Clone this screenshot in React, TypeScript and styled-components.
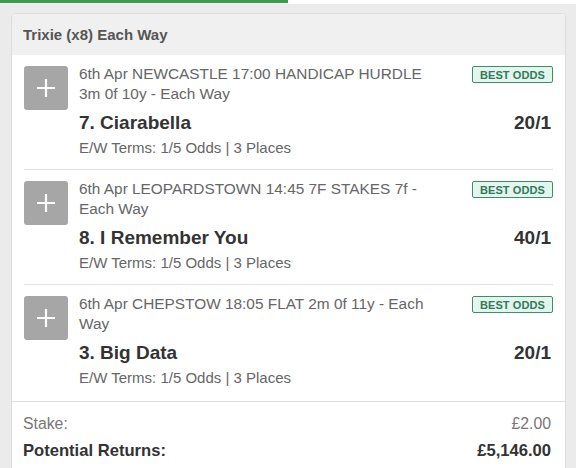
import React from "react";
import styled, { createGlobalStyle } from "styled-components";

const Global = createGlobalStyle`
  html, body { margin: 0; padding: 0; background: #ebebeb; }
  body { font-family: "Liberation Sans", Arial, sans-serif; }
`;

const Page = styled.div`
  width: 576px;
  height: 468px;
  overflow: hidden;
  background: #ebebeb;
`;

const Progress = styled.div`
  height: 4px;
  background: #ffffff;
  display: flex;
`;

const ProgressFill = styled.div`
  height: 3px;
  background: #3e9a4c;
`;

const Card = styled.div`
  margin: 9px 10px 0 11px;
  background: #fff;
  border: 1px solid #dcdcdc;
  border-radius: 4px;
  overflow: hidden;
`;

const Header = styled.div`
  height: 41px;
  display: flex;
  align-items: center;
  padding: 0 11px 1px;
  box-sizing: border-box;
  background: #f0f0f0;
  color: #555;
  font-weight: bold;
  font-size: 15px;
`;

const Item = styled.div<{ $last?: boolean }>`
  margin: 0 12px;
  padding: 11px 0 ${(p) => (p.$last ? "13px" : "11px")};
  border-bottom: ${(p) => (p.$last ? "none" : "1px solid #e2e2e2")};
  display: flex;
  gap: 11px;
`;

const PlusBox = styled.div`
  flex: none;
  width: 44px;
  height: 44px;
  border-radius: 3px;
  background: #a6a6a6;
  display: flex;
  align-items: center;
  justify-content: center;
`;

const Content = styled.div`
  flex: 1;
  min-width: 0;
  margin-top: -2px;
`;

const TopRow = styled.div`
  display: flex;
  justify-content: space-between;
  align-items: flex-start;
`;

const Desc = styled.div`
  width: 356px;
  font-size: 15.4px;
  line-height: 20px;
  color: #666;
`;

const Badge = styled.div`
  margin-top: 2px;
  width: 81px;
  height: 17px;
  box-sizing: border-box;
  border: 1px solid #3f8c6d;
  border-radius: 2px;
  background: #e4f5ed;
  color: #2f7a5c;
  font-size: 11px;
  font-weight: bold;
  display: flex;
  align-items: center;
  justify-content: center;
  letter-spacing: 0.1px;
`;

const NameRow = styled.div`
  margin-top: 7px;
  display: flex;
  justify-content: space-between;
  align-items: center;
  font-size: 19px;
  line-height: 24px;
  font-weight: bold;
  color: #333;
`;

const Odds = styled.span`
  margin-right: 2px;
`;

const Terms = styled.div`
  margin-top: 3px;
  font-size: 15px;
  line-height: 20px;
  color: #666;
`;

const Footer = styled.div`
  border-top: 1px solid #dedede;
  padding: 8px 14px 10px 11px;
`;

const FooterRow = styled.div<{ $bold?: boolean }>`
  display: flex;
  justify-content: space-between;
  font-size: ${(p) => (p.$bold ? "16.6px" : "15.8px")};
  line-height: 20px;
  height: 27px;
  align-items: center;
  color: ${(p) => (p.$bold ? "#333" : "#777")};
  font-weight: ${(p) => (p.$bold ? "bold" : "normal")};
`;

const PlusIcon = () => (
  <svg width="20" height="20" viewBox="0 0 20 20">
    <path d="M10 1v18M1 10h18" stroke="#fff" strokeWidth="2.2" />
  </svg>
);

const bets = [
  {
    desc: "6th Apr NEWCASTLE 17:00 HANDICAP HURDLE 3m 0f 10y - Each Way",
    name: "7. Ciarabella",
    odds: "20/1",
  },
  {
    desc: "6th Apr LEOPARDSTOWN 14:45 7F STAKES 7f - Each Way",
    name: "8. I Remember You",
    odds: "40/1",
  },
  {
    desc: "6th Apr CHEPSTOW 18:05 FLAT 2m 0f 11y - Each Way",
    name: "3. Big Data",
    odds: "20/1",
  },
];

export default function App() {
  return (
    <Page>
      <Global />
      <Progress>
        <ProgressFill style={{ width: "50%" }} />
      </Progress>
      <Card>
        <Header>Trixie (x8) Each Way</Header>
        {bets.map((b, i) => (
          <Item key={i} $last={i === bets.length - 1}>
            <PlusBox>
              <PlusIcon />
            </PlusBox>
            <Content>
              <TopRow>
                <Desc>{b.desc}</Desc>
                <Badge>BEST ODDS</Badge>
              </TopRow>
              <NameRow>
                <span>{b.name}</span>
                <Odds>{b.odds}</Odds>
              </NameRow>
              <Terms>E/W Terms: 1/5 Odds | 3 Places</Terms>
            </Content>
          </Item>
        ))}
        <Footer>
          <FooterRow>
            <span>Stake:</span>
            <span>£2.00</span>
          </FooterRow>
          <FooterRow $bold>
            <span>Potential Returns:</span>
            <span>£5,146.00</span>
          </FooterRow>
        </Footer>
      </Card>
    </Page>
  );
}
